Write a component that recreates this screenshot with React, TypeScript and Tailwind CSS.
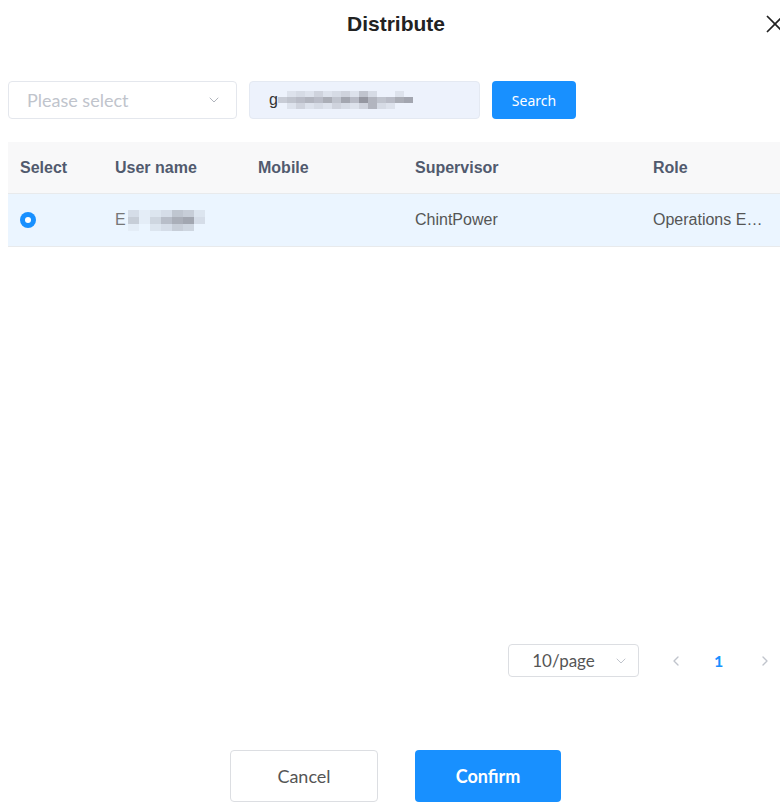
import { ChevronDown, ChevronLeft, ChevronRight, X } from 'lucide-react';

// blurred blocks standing in for redacted text
function Mosaic({ cells, w = 6, h = 6 }: { cells: number[][]; w?: number; h?: number }) {
  return (
    <span className="inline-flex flex-col align-middle">
      {cells.map((row, i) => (
        <span key={i} className="flex">
          {row.map((v, j) => (
            <span
              key={j}
              className="block"
              style={{ width: w, height: h, backgroundColor: `rgba(90,90,100,${v})` }}
            />
          ))}
        </span>
      ))}
    </span>
  );
}

const inputMosaic = [
  [0, 0.1, 0.15, 0.1, 0.2, 0.1, 0.15, 0.2, 0.1, 0.3, 0.15, 0, 0, 0.1, 0],
  [0.25, 0.3, 0.35, 0.4, 0.35, 0.45, 0.3, 0.5, 0.35, 0.6, 0.4, 0.3, 0.35, 0.45, 0.5],
  [0, 0.1, 0.2, 0.1, 0.15, 0.1, 0.2, 0.15, 0.1, 0.2, 0.4, 0.15, 0.1, 0, 0],
];

const nameMosaic = [
  [0.15, 0.05, 0.1, 0.15, 0.3, 0.25, 0.1],
  [0.25, 0.05, 0.2, 0.35, 0.45, 0.5, 0.15],
  [0.05, 0, 0.1, 0.15, 0.25, 0.2, 0],
];

export default function App() {
  return (
    <div className="w-[780px] h-[808px] overflow-hidden bg-white" style={{ fontFamily: '"Liberation Sans", Arial, sans-serif' }}>
      <div className="w-[792px]">
        {/* title */}
        <div className="flex items-center h-[48px] px-[2px]">
          <div className="w-[30px]" />
          <h2 className="flex-1 text-center text-[21px] font-bold text-[#222]">Distribute</h2>
          <X className="w-[30px] h-[30px] text-[#222]" strokeWidth={1.4} />
        </div>

        {/* search bar */}
        <div className="flex items-center gap-3 pl-2 mt-[33px]">
          <div
            className="flex items-center justify-between w-[229px] h-[38px] pl-[18px] pr-[14px] border border-[#e4e7ed] rounded text-[18px] text-[#c0c4cc]"
            style={{ fontFamily: 'Lato, sans-serif' }}
          >
            <span>Please select</span>
            <ChevronDown className="w-4 h-4 text-[#b0b4bc]" strokeWidth={1.5} />
          </div>
          <div className="flex items-center w-[231px] h-[38px] px-[19px] bg-[#edf2fc] border border-[#e4e9f2] rounded text-[16px] text-[#333]">
            <span>g</span>
            <Mosaic cells={inputMosaic} w={9} h={6} />
          </div>
          <button
            className="w-[84px] h-[38px] bg-[#1890ff] text-white text-[14px] rounded"
            style={{ fontFamily: '"Noto Sans", sans-serif' }}
          >
            Search
          </button>
        </div>

        {/* table */}
        <div className="ml-2 mt-[23px]">
          <div className="grid grid-cols-[95px_143px_157px_238px_150px] h-[52px] items-center bg-[#f8f8f9] border-b border-[#e8eaec] text-[16px] font-bold text-[#515a6e]">
            <div className="pl-3">Select</div>
            <div className="pl-3">User name</div>
            <div className="pl-3">Mobile</div>
            <div className="pl-3">Supervisor</div>
            <div className="pl-3">Role</div>
          </div>
          <div className="grid grid-cols-[95px_143px_157px_238px_150px] h-[53px] items-center bg-[#ebf5ff] border-b border-[#e8eaec] text-[16px] text-[#555]">
            <div className="pl-3">
              <span className="flex items-center justify-center w-4 h-4 rounded-full bg-[#1890ff]">
                <span className="w-[6px] h-[6px] rounded-full bg-white" />
              </span>
            </div>
            <div className="pl-3 flex items-center gap-[2px]">
              <span className="text-[#777]">E</span>
              <Mosaic cells={nameMosaic} w={11} h={7} />
            </div>
            <div className="pl-3" />
            <div className="pl-3">ChintPower</div>
            <div className="pl-3">
              <div className="w-[116px] truncate">Operations Engineer</div>
            </div>
          </div>
        </div>

        {/* pagination */}
        <div className="flex items-center ml-[508px] mt-[397px] h-[33px]" style={{ fontFamily: 'Lato, sans-serif' }}>
          <div className="relative flex items-center justify-center w-[131px] h-[33px] border border-[#dcdee2] rounded text-[17px] text-[#555]">
            <span className="-ml-[20px]">10/page</span>
            <ChevronDown className="absolute right-[9px] w-4 h-4 text-[#c0c4cc]" strokeWidth={1.5} />
          </div>
          <ChevronLeft className="w-4 h-4 ml-[29px] text-[#c0c4cc]" strokeWidth={2} />
          <span className="ml-[30px] text-[16px] font-bold text-[#1890ff]">1</span>
          <ChevronRight className="w-4 h-4 ml-[34px] text-[#c0c4cc]" strokeWidth={2} />
        </div>

        {/* footer */}
        <div className="flex gap-[37px] ml-[230px] mt-[73px]" style={{ fontFamily: 'Lato, sans-serif' }}>
          <button className="w-[148px] h-[52px] border border-[#dcdee2] rounded text-[18px] text-[#555] bg-white">
            Cancel
          </button>
          <button className="w-[146px] h-[52px] rounded text-[18px] font-bold text-white bg-[#1890ff]">
            Confirm
          </button>
        </div>
      </div>
    </div>
  );
}
